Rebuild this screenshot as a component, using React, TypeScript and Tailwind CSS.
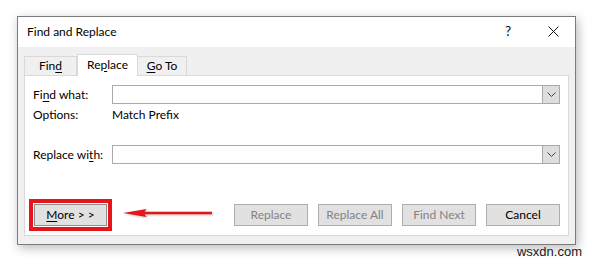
const ui = "font-['Lato',sans-serif]";

function Btn({ label, disabled }: { label: string; disabled?: boolean }) {
  return (
    <button
      className={`w-[74px] h-[22px] flex items-center justify-center bg-[#e1e1e1] border border-[#adadad] text-[12px] leading-none ${
        disabled ? "text-[#838383]" : "text-black"
      }`}
    >
      {label}
    </button>
  );
}

function Combo() {
  return (
    <div className="flex-1 h-[19px] bg-white border border-[#a9a9a9] flex justify-end">
      <div className="w-[17px] h-full bg-[#dedede] border-l border-[#a9a9a9] flex items-center justify-center">
        <svg width="9" height="5" viewBox="0 0 9 5">
          <path d="M0.5 0.5 L4.5 4.5 L8.5 0.5" stroke="#444" strokeWidth="1" fill="none" />
        </svg>
      </div>
    </div>
  );
}

export default function App() {
  return (
    <div className={`w-[594px] h-[262px] bg-white overflow-hidden ${ui}`}>
      {/* Dialog */}
      <div className="ml-[17px] mt-[16px] w-[559px] h-[229px] border border-[#7b7b7b] bg-[#f0f0f0] flex flex-col shadow-[2px_3px_10px_rgba(0,0,0,0.28)]">
        {/* Title bar */}
        <div className="h-[30px] bg-white flex items-center pl-[9px] pr-[16px]">
          <span className="text-[12px] text-black flex-1">Find and Replace</span>
          <span className="text-[13px] text-black mr-[37px]">?</span>
          <svg width="11" height="11" viewBox="0 0 11 11" className="mb-[1px]">
            <path d="M0.5 0.5 L10.5 10.5 M10.5 0.5 L0.5 10.5" stroke="#111" strokeWidth="1" fill="none" />
          </svg>
        </div>

        <div className="flex-1 px-[6px] pt-[7px]">
          {/* Tabs */}
          <div className="flex items-end h-[21px] text-[12px] text-black">
            <div className="w-[53px] h-[19px] border border-b-0 border-[#d9d9d9] flex items-center justify-center">
              <span>
                Fin<span className="underline underline-offset-2">d</span>
              </span>
            </div>
            <div className="relative z-10 w-[61px] h-[22px] -mb-px bg-white border border-b-0 border-[#d9d9d9] flex items-center justify-center pb-[2px]">
              <span>
                Re<span className="underline underline-offset-2">p</span>lace
              </span>
            </div>
            <div className="w-[49px] h-[19px] border border-b-0 border-l-0 border-[#d9d9d9] flex items-center justify-center">
              <span>
                <span className="underline underline-offset-2">G</span>o To
              </span>
            </div>
          </div>

          {/* Panel */}
          <div className="w-[545px] h-[161px] bg-white border border-[#d9d9d9] px-[8px] pt-[9px] text-[12px] text-black">
            <div className="flex items-center">
              <span className="w-[79px]">
                Fi<span className="underline underline-offset-2">n</span>d what:
              </span>
              <Combo />
            </div>
            <div className="flex items-center h-[16px] mt-[3px]">
              <span className="w-[79px]">Options:</span>
              <span>Match Prefix</span>
            </div>
            <div className="flex items-center mt-[22px]">
              <span className="w-[79px]">
                Replace wi<span className="underline underline-offset-2">t</span>h:
              </span>
              <Combo />
            </div>

            {/* Buttons */}
            <div className="flex items-center mt-[35px] -ml-[4px]">
              <div className="border-[4px] border-[#e8141b] p-px">
                <button className="w-[73px] h-[22px] flex items-center justify-center bg-[#e1e1e1] border border-[#8f8f8f] text-[12px] leading-none text-black">
                  <span>
                    <span className="underline underline-offset-2">M</span>ore &gt; &gt;
                  </span>
                </button>
              </div>
              <svg width="92" height="12" viewBox="0 0 92 12" className="ml-[11px] mb-[4px] drop-shadow-[1px_1px_1px_rgba(0,0,0,0.25)]">
                <path d="M0 6 L24 1.8 L22 4.6 L91 4.6 L91 7.4 L22 7.4 L24 10.2 Z" fill="#e3161c" />
              </svg>
              <div className="flex gap-[10px] ml-[21px]">
                <Btn label="Replace" disabled />
                <Btn label="Replace All" disabled />
                <Btn label="Find Next" disabled />
                <Btn label="Cancel" />
              </div>
            </div>
          </div>
        </div>
      </div>

      <div className="flex justify-end pr-[12px] -mt-[1px]">
        <span className="font-['Liberation_Sans',sans-serif] text-[13px] leading-[16px] text-[#1a1a1a]">wsxdn.com</span>
      </div>
    </div>
  );
}
